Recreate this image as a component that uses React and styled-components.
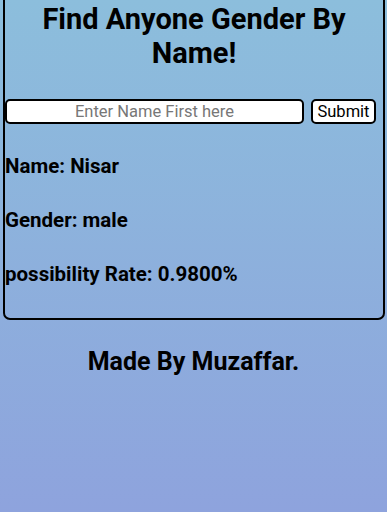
import React from "react";
import styled, { createGlobalStyle } from "styled-components";

const Global = createGlobalStyle`
  html, body { margin: 0; padding: 0; height: 100%; }
  body {
    font-family: Roboto, "Liberation Sans", sans-serif;
    background: linear-gradient(180deg, #8cbedc 0%, #8ea3dd 100%);
    min-height: 512px;
    overflow: hidden;
  }
`;

const Page = styled.div`
  min-height: 512px;
  display: flex;
  flex-direction: column;
`;

const Card = styled.section`
  margin: -10px 2px 0 3px;
  border: 2px solid #000;
  border-radius: 7px;
  padding: 0 0 32px 0;
`;

const Title = styled.h1`
  margin: 10px 20px 0;
  font-size: 29px;
  line-height: 34px;
  font-weight: 700;
  text-align: center;
  color: #000;
`;

const Form = styled.form`
  display: flex;
  align-items: center;
  gap: 7px;
  margin-top: 29px;
`;

const Input = styled.input`
  box-sizing: border-box;
  width: 299px;
  height: 25px;
  border: 2px solid #000;
  border-radius: 5px;
  background: #fff;
  font-family: Roboto, "Liberation Sans", sans-serif;
  font-size: 16.5px;
  text-align: center;
  padding: 0;
  outline: none;
  &::placeholder { color: #777; }
`;

const Button = styled.button`
  box-sizing: border-box;
  width: 65px;
  height: 25px;
  border: 2px solid #000;
  border-radius: 5px;
  background: #fff;
  font-family: Roboto, "Liberation Sans", sans-serif;
  font-size: 16.5px;
  color: #000;
  padding: 0;
`;

const Results = styled.div`
  display: flex;
  flex-direction: column;
  gap: 31px;
  margin-top: 31px;
`;

const Line = styled.h3`
  margin: 0;
  font-size: 20.5px;
  line-height: 23px;
  font-weight: 700;
  color: #000;
`;

const Footer = styled.h2`
  margin: 27px 0 0;
  font-size: 25px;
  line-height: 30px;
  font-weight: 700;
  text-align: center;
  color: #000;
`;

export default function App() {
  return (
    <>
      <Global />
      <Page>
        <Card>
          <Title>Find Anyone Gender By Name!</Title>
          <Form onSubmit={(e) => e.preventDefault()}>
            <Input placeholder="Enter Name First here" />
            <Button type="submit">Submit</Button>
          </Form>
          <Results>
            <Line>Name: Nisar</Line>
            <Line>Gender: male</Line>
            <Line>possibility Rate: 0.9800%</Line>
          </Results>
        </Card>
        <Footer>Made By Muzaffar.</Footer>
      </Page>
    </>
  );
}
